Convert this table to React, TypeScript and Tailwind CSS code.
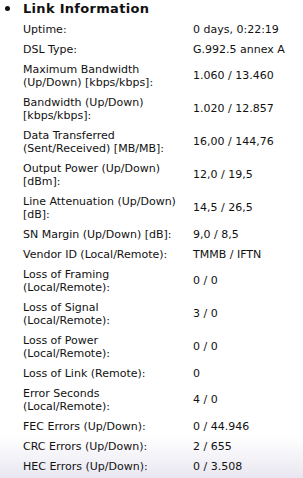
import React from "react";

type Row = { label: string[]; value: string };

const rows: Row[] = [
  { label: ["Uptime:"], value: "0 days, 0:22:19" },
  { label: ["DSL Type:"], value: "G.992.5 annex A" },
  { label: ["Maximum Bandwidth", "(Up/Down) [kbps/kbps]:"], value: "1.060 / 13.460" },
  { label: ["Bandwidth (Up/Down)", "[kbps/kbps]:"], value: "1.020 / 12.857" },
  { label: ["Data Transferred", "(Sent/Received) [MB/MB]:"], value: "16,00 / 144,76" },
  { label: ["Output Power (Up/Down)", "[dBm]:"], value: "12,0 / 19,5" },
  { label: ["Line Attenuation (Up/Down)", "[dB]:"], value: "14,5 / 26,5" },
  { label: ["SN Margin (Up/Down) [dB]:"], value: "9,0 / 8,5" },
  { label: ["Vendor ID (Local/Remote):"], value: "TMMB / IFTN" },
  { label: ["Loss of Framing", "(Local/Remote):"], value: "0 / 0" },
  { label: ["Loss of Signal", "(Local/Remote):"], value: "3 / 0" },
  { label: ["Loss of Power", "(Local/Remote):"], value: "0 / 0" },
  { label: ["Loss of Link (Remote):"], value: "0" },
  { label: ["Error Seconds", "(Local/Remote):"], value: "4 / 0" },
  { label: ["FEC Errors (Up/Down):"], value: "0 / 44.946" },
  { label: ["CRC Errors (Up/Down):"], value: "2 / 655" },
  { label: ["HEC Errors (Up/Down):"], value: "0 / 3.508" },
];

export default function App() {
  return (
    <div
      className="w-[303px] h-[478px] overflow-hidden text-[#111] bg-[linear-gradient(to_bottom,#ffffff_0px,#ffffff_436px,#e8e7f1_478px)]"
      style={{ fontFamily: '"DejaVu Sans", Verdana, sans-serif' }}
    >
      <div className="flex items-center h-[17px]">
        <span className="w-[23px] flex justify-center pr-[8px]">
          <span className="block w-[5px] h-[5px] rounded-full bg-[#111]" />
        </span>
        <span className="font-bold text-[13px] leading-[16px] tracking-[0.3px]">Link Information</span>
      </div>
      <div className="pl-[23px] pt-[2px]">
        {rows.map((r, i) => (
          <div key={i} className="flex items-center py-[3.5px] text-[11px] leading-[13px]">
            <div className="w-[170px] shrink-0">
              {r.label.map((l, j) => (
                <div key={j}>{l}</div>
              ))}
            </div>
            <div>{r.value}</div>
          </div>
        ))}
      </div>
    </div>
  );
}
